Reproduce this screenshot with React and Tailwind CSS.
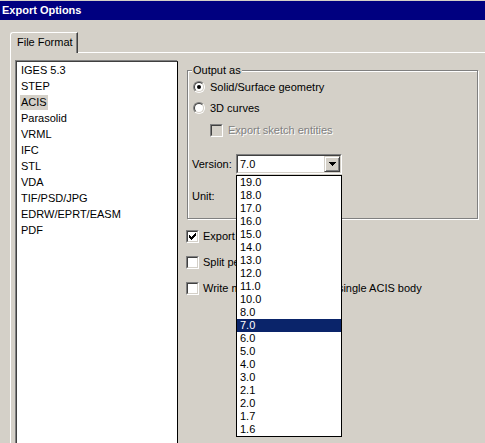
import React from 'react';

const formats = ['IGES 5.3', 'STEP', 'ACIS', 'Parasolid', 'VRML', 'IFC', 'STL', 'VDA', 'TIF/PSD/JPG', 'EDRW/EPRT/EASM', 'PDF'];
const versions = ['19.0', '18.0', '17.0', '16.0', '15.0', '14.0', '13.0', '12.0', '11.0', '10.0', '8.0', '7.0', '6.0', '5.0', '4.0', '3.0', '2.1', '2.0', '1.7', '1.6'];

function Radio({ checked }) {
    return (
        <div className="w-[12px] h-[12px] rounded-full border border-t-[#808080] border-l-[#808080] border-b-white border-r-white flex shrink-0">
            <div className="flex-1 rounded-full border border-t-[#404040] border-l-[#404040] border-b-[#d4d0c8] border-r-[#d4d0c8] bg-white flex items-center justify-center">
                {checked && <div className="w-[4px] h-[4px] rounded-full bg-black" />}
            </div>
        </div>
    );
}

function Check({ checked, disabled }) {
    return (
        <div className="w-[13px] h-[13px] border border-t-[#808080] border-l-[#808080] border-b-white border-r-white flex shrink-0">
            <div className={`flex-1 border border-t-[#404040] border-l-[#404040] border-b-[#d4d0c8] border-r-[#d4d0c8] flex items-center justify-center ${disabled ? 'bg-[#d4d0c8]' : 'bg-white'}`}>
                {checked && (
                    <svg width="7" height="7" viewBox="0 0 7 7">
                        <path d="M0 2h1v1h1v1h1v-1h1v-1h1v-1h1v-1h1v3h-1v1h-1v1h-1v1h-1v1h-1v-1h-1v-1h-1v-1h-1z" fill="#000" />
                    </svg>
                )}
            </div>
        </div>
    );
}

export default function App() {
    return (
        <div className="w-[485px] h-[443px] bg-[#d4d0c8] overflow-hidden relative font-['Liberation_Sans',Tahoma,sans-serif] text-[11px] leading-[13px] text-black">
            {/* TITLE */}
            <div className="pt-px">
                <div className="h-[19px] bg-[#000080] text-white font-bold flex items-center pl-[2px]">Export Options</div>
            </div>

            {/* TABS */}
            <div className="pl-[10px] pt-[12px] flex items-end">
                <div className="w-[68px] h-[21px] pl-[6px] pt-[3px] border-l border-t border-white border-r border-r-[#404040] rounded-tl-[3px] shadow-[inset_-1px_0_0_#808080]">
                    File Format
                </div>
                <div className="flex-1 h-[21px] border-b border-white" />
            </div>

            {/* PANEL */}
            <div className="ml-[10px] border-l border-white flex pt-[8px] pl-[5px] gap-[9px] h-[400px]">
                <div className="w-[162px] h-[392px] bg-white border border-[#404040] border-r-black shadow-[-1px_-1px_0_#808080] pl-[3px] shrink-0">
                    {formats.map((f) => (
                        <div key={f} className="h-[16px] flex items-center">
                            <span className={`px-px leading-[15px] ${f === 'ACIS' ? 'bg-[#d4d0c8]' : ''}`}>{f}</span>
                        </div>
                    ))}
                </div>

                <div className="flex flex-col">
                    {/* OUTPUT AS GROUP */}
                    <div className="mt-[9px] w-[291px] border border-[#808080] shadow-[1px_1px_0_#fff,inset_1px_1px_0_#fff] pl-[5px] pb-[14px]">
                        <span className="block w-fit -mt-[7px] -ml-px px-px bg-[#d4d0c8]">Output as</span>
                        <div className="mt-[2px] h-[16px] flex items-center gap-[5px]">
                            <Radio checked />
                            <span>Solid/Surface geometry</span>
                        </div>
                        <div className="mt-[5px] h-[16px] flex items-center gap-[5px]">
                            <Radio />
                            <span>3D curves</span>
                        </div>
                        <div className="mt-[6px] ml-[17px] h-[16px] flex items-center gap-[5px]">
                            <Check disabled />
                            <span className="text-[#808080] [text-shadow:1px_1px_0_#fff]">Export sketch entities</span>
                        </div>
                        <div className="mt-[16px] -ml-px h-[20px] flex items-center">
                            <span className="w-[44px]">Version:</span>
                            <div className="w-[106px] h-[20px] border border-t-[#808080] border-l-[#808080] border-b-white border-r-white flex">
                                <div className="flex-1 flex border border-t-[#404040] border-l-[#404040] border-b-[#d4d0c8] border-r-[#d4d0c8] bg-white">
                                    <span className="flex-1 pl-[2px] flex items-center">7.0</span>
                                    <div className="w-[16px] h-[16px] bg-[#d4d0c8] border border-t-[#d4d0c8] border-l-[#d4d0c8] border-b-[#404040] border-r-[#404040] shadow-[inset_1px_1px_0_#fff,inset_-1px_-1px_0_#808080] flex items-center justify-center">
                                        <svg width="7" height="4" viewBox="0 0 7 4">
                                            <path d="M0 0h7v1h-1v1h-1v1h-1v1h-1v-1h-1v-1h-1v-1h-1z" fill="#000" />
                                        </svg>
                                    </div>
                                </div>
                            </div>
                        </div>
                        <div className="mt-[14px] -ml-px h-[16px] flex items-center">
                            <span>Unit:</span>
                        </div>
                    </div>

                    {/* OPTIONS */}
                    <div className="mt-[9px] -ml-px h-[16px] flex items-center gap-[4px]">
                        <Check checked />
                        <span>Export 3D Curve features</span>
                    </div>
                    <div className="mt-[10px] -ml-px h-[16px] flex items-center gap-[4px]">
                        <Check />
                        <span>Split periodic faces</span>
                    </div>
                    <div className="mt-[10px] -ml-px h-[16px] flex items-center gap-[4px]">
                        <Check />
                        <span className="whitespace-nowrap">Write multiple bodies into a single ACIS body</span>
                    </div>
                </div>
            </div>

            {/* VERSION DROPDOWN */}
            <div className="absolute left-[236px] top-[175px] w-[106px] h-[262px] bg-white border border-black">
                {versions.map((v) => (
                    <div key={v} className={`h-[13px] pl-[3px] leading-[13px] ${v === '7.0' ? 'bg-[#0a246a] text-white' : ''}`}>{v}</div>
                ))}
            </div>
        </div>
    );
}
